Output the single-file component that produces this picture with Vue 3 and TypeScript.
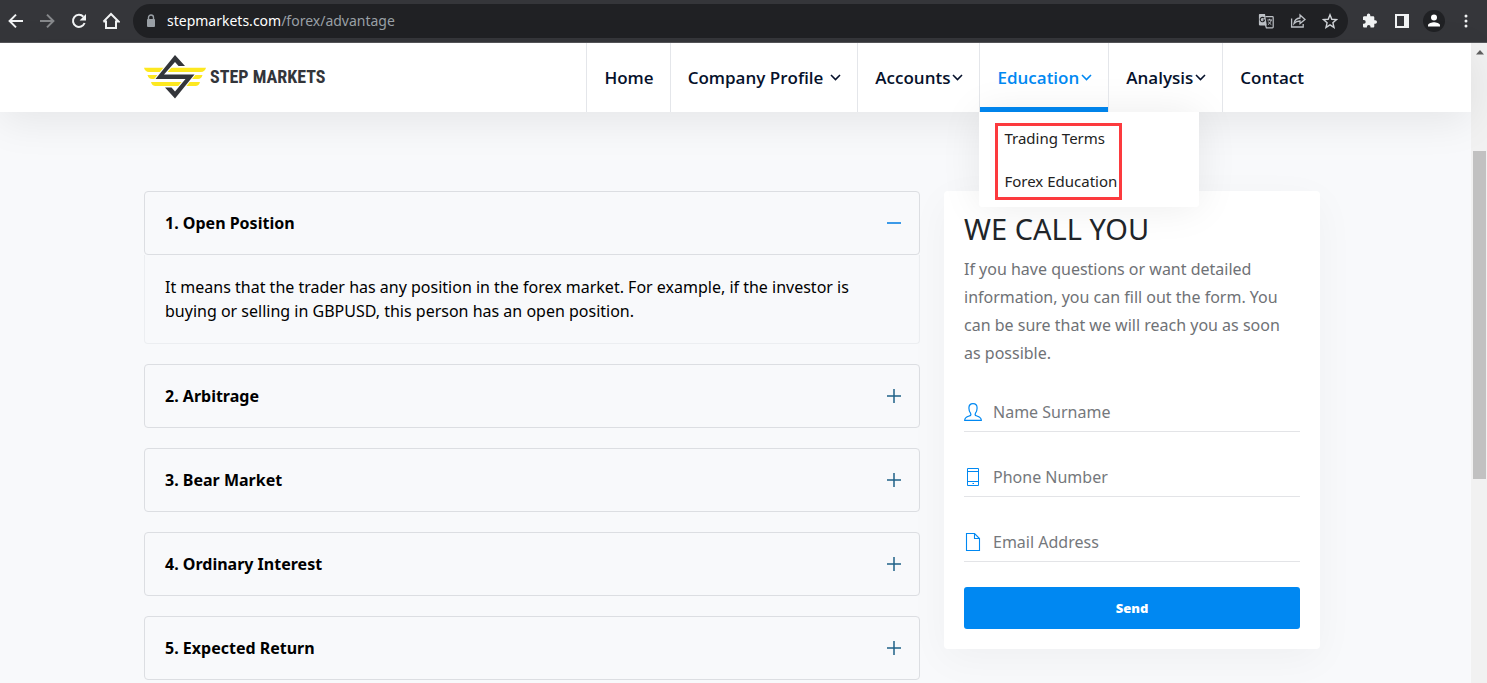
<script setup lang="ts">
import { ref } from 'vue'

interface NavItem {
  label: string
  menu?: boolean
  spaced?: boolean
  active?: boolean
}
interface Term {
  title: string
  body: string
}

const nav: NavItem[] = [
  { label: 'Home' },
  { label: 'Company Profile', menu: true, spaced: true },
  { label: 'Accounts', menu: true },
  { label: 'Education', menu: true, active: true },
  { label: 'Analysis', menu: true },
  { label: 'Contact' },
]

const submenu: string[] = ['Trading Terms', 'Forex Education']

const terms: Term[] = [
  {
    title: '1. Open Position',
    body: 'It means that the trader has any position in the forex market. For example, if the investor is buying or selling in GBPUSD, this person has an open position.',
  },
  { title: '2. Arbitrage', body: '' },
  { title: '3. Bear Market', body: '' },
  { title: '4. Ordinary Interest', body: '' },
  { title: '5. Expected Return', body: '' },
]

const open = ref<number>(0)
const name = ref('')
const phone = ref('')
const email = ref('')

function toggle(i: number): void {
  open.value = open.value === i ? -1 : i
}
</script>

<template>
  <div class="window">
    <div class="toolbar">
      <button class="tool" aria-label="Back">
        <svg width="16" height="16" viewBox="0 0 16 16"><path d="M15 8H2M8 1.6 1.6 8 8 14.4" fill="none" stroke="#f1f3f4" stroke-width="2" /></svg>
      </button>
      <button class="tool" aria-label="Forward">
        <svg width="16" height="16" viewBox="0 0 16 16"><path d="M1 8h13M8 1.6 14.4 8 8 14.4" fill="none" stroke="#86888b" stroke-width="2" /></svg>
      </button>
      <button class="tool" aria-label="Reload">
        <svg width="16" height="16" viewBox="0 0 16 16"><path d="M13.6 10A6 6 0 1 1 12.4 3.8" fill="none" stroke="#f1f3f4" stroke-width="2" /><path d="M15 1v6.4H8.6z" fill="#f1f3f4" /></svg>
      </button>
      <button class="tool" aria-label="Home">
        <svg width="18" height="18" viewBox="0 0 18 18"><path d="M4 9v7h10V9M1.4 9.6 9 2l7.6 7.6H13M1.4 9.6H5" fill="none" stroke="#f1f3f4" stroke-width="2" /></svg>
      </button>
      <div class="address">
        <svg class="lock" width="10" height="14" viewBox="0 0 10 14"><rect x="1" y="5" width="8" height="8" rx="1" fill="#9aa0a6" /><path d="M2.5 6V3.5a2.5 2.5 0 0 1 5 0V6" fill="none" stroke="#9aa0a6" stroke-width="1.4" /></svg>
        <span class="url"><b>stepmarkets.com</b>/forex/advantage</span>
        <button class="tool" aria-label="Translate">
          <svg width="16" height="16" viewBox="0 0 16 16"><path d="M7.400 3.600h7a.8.8 0 0 1 .8.8v9.600a.8.8 0 0 1-.8.8H8.400L7.400 12" fill="none" stroke="#bdc1c6" stroke-width="1.200" /><path d="M9.400 7h4.600M11.600 5.800V7M13.200 7c-.4 2-1.600 3.600-3.200 4.600M10.400 8.600c.8 1.400 1.700 2.300 2.900 3" fill="none" stroke="#bdc1c6" /><path d="M1.700 1H7l1.800 11.400H1.700A.8.8 0 0 1 .9 11.600V1.800a.8.8 0 0 1 .8-.8z" fill="#bdc1c6" /><path d="M6.200 5.200A2.200 2.200 0 1 0 6.600 7H4.800" fill="none" stroke="#202124" stroke-width="1.100" /></svg>
        </button>
        <button class="tool" aria-label="Share">
          <svg width="16" height="16" viewBox="0 0 16 16"><path d="M1.600 5.500V14h11.600v-3M4 10.600C4.600 7 6.600 5.200 10 5V2l5 4.400-5 4.200V8C7.200 8 5.600 8.800 4 10.600z" fill="none" stroke="#bdc1c6" stroke-width="1.300" /></svg>
        </button>
        <button class="tool" aria-label="Bookmark">
          <svg width="16" height="16" viewBox="0 0 16 16"><path d="m8 1.800 1.800 4.500 4.700.3-3.600 3.100 1.100 4.700L8 11.900l-4 2.500 1.100-4.700-3.600-3.100 4.700-.3z" fill="none" stroke="#d0d3d7" stroke-width="1.400" /></svg>
        </button>
      </div>
      <button class="tool" aria-label="Extensions">
        <svg width="16" height="16" viewBox="0 0 16 16"><path d="M13.300 7.300h-1V4.500c0-.8-.6-1.300-1.300-1.300H8.300v-1a1.700 1.700 0 0 0-3.400 0v1H2.300C1.500 3.200 1 3.800 1 4.500v2.600h.9a1.800 1.800 0 0 1 0 3.600H1v2.600c0 .8.600 1.300 1.300 1.300h2.600v-.9a1.800 1.800 0 0 1 3.600 0v.9H11c.8 0 1.300-.6 1.300-1.300v-2.600h1a1.700 1.700 0 0 0 0-3.400z" fill="#f1f3f4" /></svg>
      </button>
      <button class="tool" aria-label="Side panel">
        <svg width="16" height="16" viewBox="0 0 16 16"><path d="M1 1h14v14H1zM3 3v10h7V3z" fill="#f1f3f4" fill-rule="evenodd" /></svg>
      </button>
      <button class="tool" aria-label="Profile">
        <svg width="22" height="22" viewBox="0 0 22 22"><circle cx="11" cy="11" r="11" fill="#202124" /><circle cx="11" cy="7.600" r="3" fill="#fff" /><path d="M5 16.600v-1.400c0-2 4-3 6-3s6 1 6 3v1.400z" fill="#fff" /></svg>
      </button>
      <button class="tool" aria-label="More">
        <svg width="16" height="16" viewBox="0 0 16 16" fill="#f1f3f4"><circle cx="8" cy="3" r="1.500" /><circle cx="8" cy="8" r="1.500" /><circle cx="8" cy="13" r="1.500" /></svg>
      </button>
    </div>

    <div class="viewport">
      <div class="page">
        <header class="header">
          <a class="logo" href="#">
            <svg width="62" height="45" viewBox="0 0 62 45">
              <path d="M0 12.700h62c-.6 2.600-2.400 4.300-5 4.300H5c-2.600 0-4.400-1.700-5-4.300zM3.500 20h55c-.6 2.400-2.200 4-4.500 4H8c-2.300 0-3.900-1.600-4.500-4zM7 27h49c-.6 2.400-2.200 4-4.500 4h-40C9.200 31 7.600 29.400 7 27z" fill="#fde820" />
              <path d="M31 0 41 11h-6.500L31 7 20 19.500H50.500L31 43.500 21 32.500h6.500l3.500 4 10.500-12.500H11.500z" fill="#33353a" stroke="#fff" stroke-width="2" paint-order="stroke" />
            </svg>
            <span>STEP MARKETS</span>
          </a>
          <nav class="nav">
            <div v-for="item in nav" :key="item.label" class="entry" :class="{ active: item.active }">
              <a href="#" :class="{ spaced: item.spaced }">
                {{ item.label }}
                <svg v-if="item.menu" width="11" height="7" viewBox="0 0 11 7"><path d="m1 1 4.500 4.500L10 1" fill="none" stroke="currentColor" stroke-width="1.600" /></svg>
              </a>
              <div v-if="item.active" class="dropdown">
                <ul>
                  <li v-for="s in submenu" :key="s"><a href="#">{{ s }}</a></li>
                </ul>
              </div>
            </div>
          </nav>
        </header>

        <main class="content">
          <section class="accordion">
            <article v-for="(t, i) in terms" :key="t.title" class="term">
              <button class="head" :aria-expanded="open === i" @click="toggle(i)">
                <span>{{ t.title }}</span>
                <svg v-if="open === i" width="14" height="14" viewBox="0 0 14 14"><path d="M0 7h14" stroke="#3c9ae8" stroke-width="2" /></svg>
                <svg v-else width="14" height="14" viewBox="0 0 14 14"><path d="M0 7h14M7 0v14" stroke="#1f6188" stroke-width="1.500" /></svg>
              </button>
              <p v-if="open === i" class="body">{{ t.body }}</p>
            </article>
          </section>

          <form class="call" @submit.prevent>
            <h2>WE CALL YOU</h2>
            <p>If you have questions or want detailed information, you can fill out the form. You can be sure that we will reach you as soon as possible.</p>
            <label class="field">
              <svg width="18" height="18" viewBox="0 0 18 18"><path d="M.7 17.300c0-3.300 2.300-3.700 5-4.500 1.300-.4 1.500-1.500.8-2.600C5.400 8.600 4.900 7.300 4.900 5c0-2.600 1.700-4.300 4.100-4.300S13.100 2.400 13.100 5c0 2.300-.5 3.600-1.600 5.200-.7 1.100-.5 2.200.8 2.600 2.700.8 5 1.200 5 4.500z" fill="none" stroke="#0088f2" stroke-width="1.200" /></svg>
              <input v-model="name" type="text" placeholder="Name Surname" aria-label="Name Surname">
            </label>
            <label class="field">
              <svg width="18" height="18" viewBox="0 0 18 18"><path d="M3.500.5h11v17h-11zM3.500 3.500h11M3.500 13.500h11M8.500 15.500h1.500" fill="none" stroke="#0088f2" /></svg>
              <input v-model="phone" type="tel" placeholder="Phone Number" aria-label="Phone Number">
            </label>
            <label class="field">
              <svg width="18" height="18" viewBox="0 0 18 18"><path d="M2.500.5h8l5 5v12h-13zM10.500.5v5h5" fill="none" stroke="#0088f2" stroke-width="1.100" /></svg>
              <input v-model="email" type="email" placeholder="Email Address" aria-label="Email Address">
            </label>
            <button class="send" type="submit">Send</button>
          </form>
        </main>
      </div>

      <div class="scrollbar">
        <svg width="8" height="5" viewBox="0 0 8 5"><path d="M4 0l4 4.500H0z" fill="#606060" /></svg>
        <div class="track"><div class="thumb"></div></div>
      </div>
    </div>
  </div>
</template>

<style>
body {
  margin: 0;
  background: #f8f9fb;
}
</style>

<style scoped>
.window {
  display: flex;
  flex-direction: column;
  min-height: 100vh;
  font-family: "Noto Sans", "Open Sans", sans-serif;
  color: #000;
}
.window * {
  box-sizing: border-box;
}
button {
  border: 0;
  margin: 0;
  padding: 0;
  background: none;
  font-family: inherit;
  cursor: pointer;
}
a {
  color: inherit;
  text-decoration: none;
}
svg {
  display: block;
  flex: none;
}
.toolbar {
  display: flex;
  align-items: center;
  padding: 4px 5px 4px 0;
  background: #35363a;
  border-bottom: 1px solid #55565a;
}
.tool {
  display: flex;
  align-items: center;
  justify-content: center;
  width: 32px;
  height: 32px;
}
.toolbar > .tool:first-child {
  width: 31px;
}
.address {
  flex: 1;
  display: flex;
  align-items: center;
  height: 34px;
  margin: 0 6px;
  padding: 0 2px 0 13px;
  border-radius: 17px;
  background: #202124;
}
.url {
  flex: 1;
  margin-left: 11px;
  font-size: 14px;
  line-height: 20px;
  color: #9aa0a6;
}
.url b {
  font-weight: 400;
  color: #fff;
}
.viewport {
  flex: 1;
  display: flex;
}
.page {
  flex: 1;
  min-width: 0;
}
.header {
  position: relative;
  z-index: 1;
  display: flex;
  justify-content: space-between;
  height: 69px;
  padding: 0 151px 0 144px;
  background: #fff;
  box-shadow: 0 10px 40px rgba(0, 0, 0, 0.08);
}
.logo {
  display: flex;
  align-items: center;
  gap: 4px;
  font-family: "Roboto Condensed", "Liberation Sans Narrow", "Liberation Sans", sans-serif;
  font-size: 18px;
  font-weight: 700;
  color: #33353a;
  white-space: nowrap;
}
.logo span {
  padding-bottom: 3px;
}
.nav {
  display: flex;
}
.entry {
  position: relative;
  display: flex;
  border-left: 1px solid #e4e6ea;
}
.entry > a {
  display: flex;
  align-items: center;
  gap: 2px;
  padding: 0 16px 0 17px;
  font-family: "Open Sans", "Noto Sans", sans-serif;
  font-size: 17px;
  font-weight: 600;
  line-height: 24px;
  color: #06112b;
  white-space: nowrap;
}
.entry > a.spaced {
  gap: 7px;
}
.entry.active > a {
  color: #0088f2;
  box-shadow: inset 0 -5px #0088f2;
}
.dropdown {
  position: absolute;
  top: 100%;
  left: -1px;
  width: 220px;
  padding: 11px 16px 7px;
  background: #fff;
  border-radius: 0 0 3px 3px;
  box-shadow: 0 0 40px rgba(0, 0, 0, 0.08);
}
.dropdown ul {
  display: flex;
  flex-direction: column;
  gap: 19px;
  width: max-content;
  margin: 0;
  padding: 0 2px 4px 6px;
  border: 3px solid #fc3a3e;
  list-style: none;
}
.dropdown li {
  font-size: 15px;
  line-height: 24px;
  color: #222;
}
.content {
  display: grid;
  grid-template-columns: minmax(0, 1fr) 376px;
  gap: 24px;
  align-items: start;
  padding: 79px 151px 0 144px;
}
.accordion {
  display: flex;
  flex-direction: column;
  gap: 20px;
}
.head {
  display: flex;
  align-items: center;
  justify-content: space-between;
  width: 100%;
  height: 64px;
  padding: 0 18px 0 20px;
  border: 1px solid #dcdee2;
  border-radius: 4px;
  font-size: 16px;
  font-weight: 700;
  line-height: 24px;
  color: #000;
  text-align: left;
}
.body {
  margin: 0;
  padding: 20px;
  border: 1px solid #eceef1;
  border-top: 0;
  border-radius: 0 0 4px 4px;
  font-size: 16px;
  line-height: 24px;
}
.call {
  display: flex;
  flex-direction: column;
  gap: 25px;
  padding: 20px;
  background: #fff;
  border-radius: 4px;
  box-shadow: 0 10px 40px rgba(0, 0, 0, 0.04);
}
.call h2 {
  margin: 0 0 -17px;
  font-size: 29px;
  font-weight: 400;
  line-height: 36px;
  color: #212529;
}
.call p {
  margin: 0;
  font-size: 16px;
  line-height: 28px;
  color: #6f7276;
}
.field {
  display: flex;
  align-items: center;
  gap: 11px;
  height: 40px;
  border-bottom: 1px solid #e3e4e7;
}
.field input {
  flex: 1;
  min-width: 0;
  padding: 0;
  border: 0;
  outline: 0;
  background: none;
  font-family: inherit;
  font-size: 16px;
  line-height: 24px;
  color: #212529;
}
.field input::placeholder {
  color: #75787c;
  opacity: 1;
}
.send {
  height: 42px;
  border-radius: 3px;
  background: #0088f2;
  font-family: "Open Sans", "Noto Sans", sans-serif;
  font-size: 13px;
  font-weight: 800;
  color: #fff;
}
.scrollbar {
  display: flex;
  flex-direction: column;
  align-items: center;
  width: 16px;
  padding: 7px 1px 17px 2px;
  background: #f1f1f1;
}
.track {
  flex: 1;
  display: flex;
  flex-direction: column;
  width: 100%;
}
.track::before {
  content: "";
  flex: 96;
}
.track::after {
  content: "";
  flex: 187;
}
.thumb {
  flex: 328;
  background: #c1c1c1;
}
</style>
